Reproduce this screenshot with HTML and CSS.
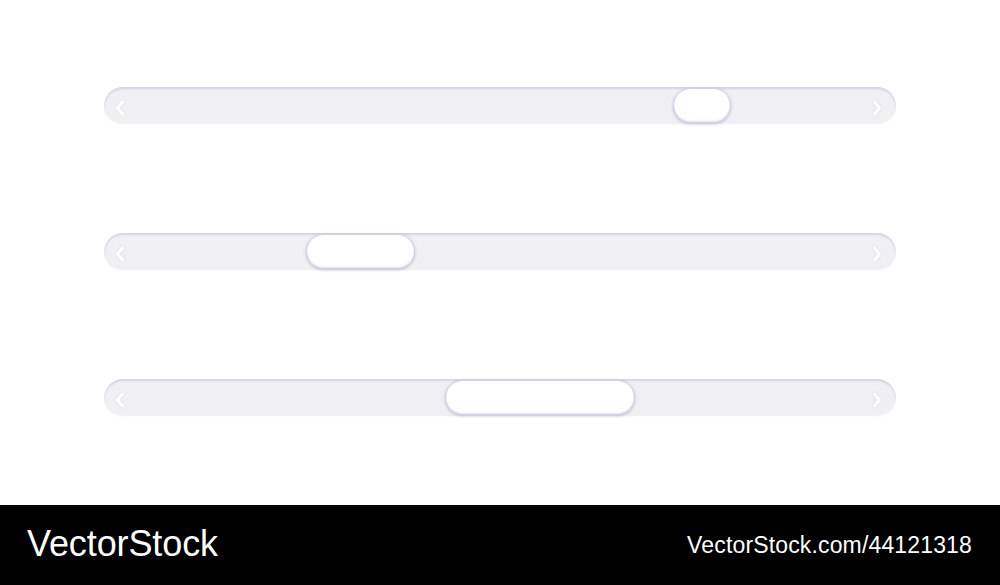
FILE: index.html
```html
<!DOCTYPE html>
<html lang="en">
<head>
    <meta charset="UTF-8">
    <meta name="viewport" content="width=device-width, initial-scale=1.0">
    <title>Scrollbars</title>
    <link rel="stylesheet" href="styles.css">
</head>
<body>
    <div class="canvas">
        <div class="track">
            <svg class="arrow" width="10" height="16" viewBox="0 0 10 16"><path d="M7.5 2 L2.5 8 L7.5 14" /></svg>
            <div class="thumb" style="left: 569px; width: 58px;"></div>
            <svg class="arrow" width="10" height="16" viewBox="0 0 10 16"><path d="M2.5 2 L7.5 8 L2.5 14" /></svg>
        </div>
        <div class="track">
            <svg class="arrow" width="10" height="16" viewBox="0 0 10 16"><path d="M7.5 2 L2.5 8 L7.5 14" /></svg>
            <div class="thumb" style="left: 202px; width: 109px;"></div>
            <svg class="arrow" width="10" height="16" viewBox="0 0 10 16"><path d="M2.5 2 L7.5 8 L2.5 14" /></svg>
        </div>
        <div class="track">
            <svg class="arrow" width="10" height="16" viewBox="0 0 10 16"><path d="M7.5 2 L2.5 8 L7.5 14" /></svg>
            <div class="thumb" style="left: 341px; width: 190px;"></div>
            <svg class="arrow" width="10" height="16" viewBox="0 0 10 16"><path d="M2.5 2 L7.5 8 L2.5 14" /></svg>
        </div>
    </div>
    <div class="footer">
        <span class="brand">VectorStock</span>
        <span class="ref">VectorStock.com/44121318</span>
    </div>
</body>
</html>
```
FILE: styles.css
```css
body {
    margin: 0;
    padding: 0;
    background: #fff;
    font-family: 'Liberation Sans', Arial, sans-serif;
}

.canvas {
    height: 505px;
    box-sizing: border-box;
    padding: 87px 104px 0;
    display: flex;
    flex-direction: column;
    gap: 108px;
}

.track {
    position: relative;
    height: 38px;
    border-radius: 19px;
    background: #efeff4;
    box-shadow: inset 0 2px 2px rgba(160, 160, 200, 0.35), inset 0 -1px 1px rgba(255, 255, 255, 0.9);
    display: flex;
    align-items: center;
    justify-content: space-between;
    padding: 3px 16px 0 11px;
    box-sizing: border-box;
}

.track .arrow:last-child {
    margin-right: -2px;
}

.arrow {
    filter: drop-shadow(0 0 1px rgba(200, 200, 220, 0.6));
}

.arrow path {
    fill: none;
    stroke: #fff;
    stroke-width: 3;
    stroke-linecap: round;
    stroke-linejoin: round;
}

.thumb {
    position: absolute;
    top: 1px;
    height: 35px;
    box-sizing: border-box;
    border-radius: 18px;
    background: #fff;
    border: 1px solid #d2d2e0;
    box-shadow: 0 1px 3px rgba(140, 140, 185, 0.5), inset 0 -1px 2px rgba(200, 200, 220, 0.5);
}

.footer {
    height: 80px;
    background: #000;
    color: #fff;
    display: flex;
    align-items: center;
    justify-content: space-between;
    padding: 0 28px 0 27px;
}

.brand {
    font-size: 36px;
    letter-spacing: -0.1px;
    margin-top: -2px;
}

.ref {
    font-size: 23px;
    letter-spacing: 0.15px;
}
```
